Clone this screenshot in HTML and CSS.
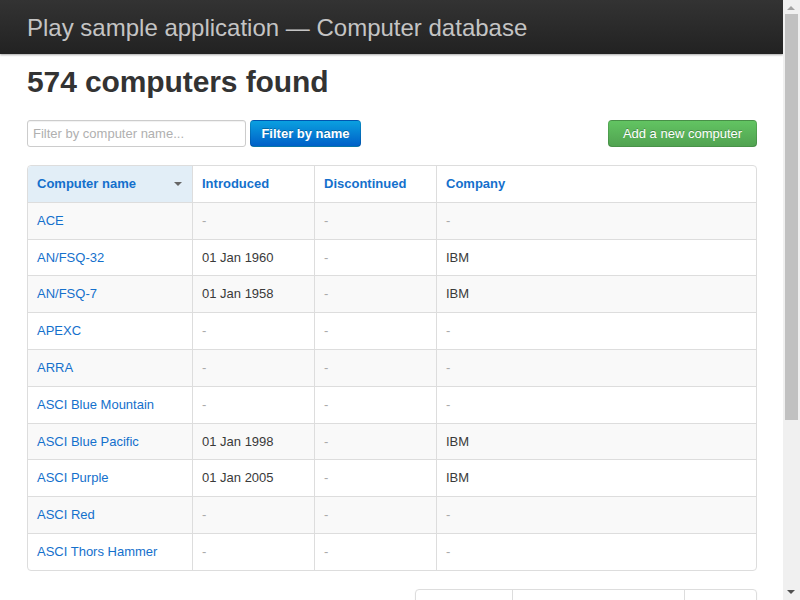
FILE: index.html
```html
<!DOCTYPE html>
<html>
<head>
<meta charset="utf-8">
<title>Computers database</title>
<link rel="stylesheet" href="styles.css">
</head>
<body>
<div class="page">
<header class="topbar">
  <a class="brand" href="#">Play sample application — Computer database</a>
</header>
<section class="main">
  <h1 class="title">574 computers found</h1>
  <div class="actions">
    <form class="filter">
      <input class="search" type="search" placeholder="Filter by computer name...">
      <button class="btn btn-primary" type="button">Filter by name</button>
    </form>
    <a class="btn btn-success" href="#">Add a new computer</a>
  </div>
  <table class="computers">
    <thead>
      <tr>
        <th class="c-name sorted"><a href="#">Computer name</a><span class="caret"></span></th>
        <th class="c-intro"><a href="#">Introduced</a></th>
        <th class="c-disc"><a href="#">Discontinued</a></th>
        <th class="c-comp"><a href="#">Company</a></th>
      </tr>
    </thead>
    <tbody>
      <tr><td><a href="#">ACE</a></td><td><em>-</em></td><td><em>-</em></td><td><em>-</em></td></tr>
      <tr><td><a href="#">AN/FSQ-32</a></td><td>01 Jan 1960</td><td><em>-</em></td><td>IBM</td></tr>
      <tr><td><a href="#">AN/FSQ-7</a></td><td>01 Jan 1958</td><td><em>-</em></td><td>IBM</td></tr>
      <tr><td><a href="#">APEXC</a></td><td><em>-</em></td><td><em>-</em></td><td><em>-</em></td></tr>
      <tr><td><a href="#">ARRA</a></td><td><em>-</em></td><td><em>-</em></td><td><em>-</em></td></tr>
      <tr><td><a href="#">ASCI Blue Mountain</a></td><td><em>-</em></td><td><em>-</em></td><td><em>-</em></td></tr>
      <tr><td><a href="#">ASCI Blue Pacific</a></td><td>01 Jan 1998</td><td><em>-</em></td><td>IBM</td></tr>
      <tr><td><a href="#">ASCI Purple</a></td><td>01 Jan 2005</td><td><em>-</em></td><td>IBM</td></tr>
      <tr><td><a href="#">ASCI Red</a></td><td><em>-</em></td><td><em>-</em></td><td><em>-</em></td></tr>
      <tr><td><a href="#">ASCI Thors Hammer</a></td><td><em>-</em></td><td><em>-</em></td><td><em>-</em></td></tr>
    </tbody>
  </table>
  <nav class="pagination">
    <ul>
      <li class="prev disabled"><a>&larr; Previous</a></li>
      <li class="current"><a>Displaying 1 to 10 of 574</a></li>
      <li class="next"><a href="#">Next &rarr;</a></li>
    </ul>
  </nav>
</section>
</div>
<div class="scrollbar" aria-hidden="true">
  <span class="sb-up"></span>
  <span class="sb-thumb"></span>
  <span class="sb-down"></span>
</div>
</body>
</html>
```

FILE: styles.css
```css
html, body {
  margin: 0;
  padding: 0;
}
body {
  font-family: "Liberation Sans", Arial, sans-serif;
  font-size: 13px;
  line-height: 18px;
  color: #3a3a3a;
  background: #fff;
}
a {
  color: #1470cc;
  text-decoration: none;
}
.page {
  width: 783px;
}
.topbar {
  height: 54px;
  background: linear-gradient(#333333, #222222);
  box-shadow: 0 1px 2px rgba(0,0,0,0.35);
  padding: 0 27px;
  display: flex;
  align-items: center;
}
.brand {
  color: #c4c4c4;
  font-size: 24px;
  line-height: 30px;
  margin-top: 1px;
}
.main {
  margin: 0 26px 0 27px;
}
.title {
  font-size: 30px;
  line-height: 36px;
  font-weight: bold;
  margin: 10px 0 20px;
  color: #333;
  letter-spacing: -0.1px;
}
.actions {
  display: flex;
  justify-content: space-between;
  align-items: center;
  margin-bottom: 18px;
}
.filter {
  display: flex;
  gap: 4px;
  margin: 0;
}
.search {
  box-sizing: border-box;
  width: 219px;
  height: 27px;
  border: 1px solid #ccc;
  border-radius: 3px;
  padding: 3px 5px;
  font-family: "Liberation Sans", Arial, sans-serif;
  font-size: 13px;
  color: #555;
  box-shadow: inset 0 1px 1px rgba(0,0,0,0.06);
  margin: 0;
}
.search::placeholder {
  color: #b0b0b0;
}
.btn {
  box-sizing: border-box;
  height: 27px;
  display: inline-flex;
  align-items: center;
  justify-content: center;
  border-radius: 4px;
  font-family: "Liberation Sans", Arial, sans-serif;
  font-size: 13px;
  color: #fff;
  text-shadow: 0 -1px 0 rgba(0,0,0,0.25);
  border: 1px solid rgba(0,0,0,0.12);
  border-bottom-color: rgba(0,0,0,0.25);
  margin: 0;
}
.btn-primary {
  width: 111px;
  font-weight: bold;
  background: linear-gradient(#0aa0e0, #0060c8);
}
.btn-success {
  width: 149px;
  background: linear-gradient(#62c462, #51a351);
}
.computers {
  width: 730px;
  border-collapse: separate;
  border-spacing: 0;
  border: 1px solid #ddd;
  border-radius: 4px;
  table-layout: fixed;
  margin-bottom: 18px;
}
.computers th, .computers td {
  text-align: left;
  padding: 8px 10px 8px 9px;
  line-height: 19.8px;
  border-left: 1px solid #ddd;
  border-top: 1px solid #ddd;
  vertical-align: middle;
}
.computers th {
  border-top: 0;
  font-weight: bold;
  position: relative;
  padding-top: 8px;
  padding-bottom: 8px;
}
.computers th a {
  color: #1470cc;
}
.computers th:first-child, .computers td:first-child {
  border-left: 0;
}
.c-name { width: 145px; }
.c-intro { width: 102px; }
.c-disc { width: 102px; }
.computers th.sorted {
  background: #e2eef7;
  border-top-left-radius: 4px;
}
.caret {
  position: absolute;
  right: 10px;
  top: 16px;
  width: 0;
  height: 0;
  border-left: 4px solid transparent;
  border-right: 4px solid transparent;
  border-top: 4px solid #666;
}
.computers tbody tr:nth-child(odd) td {
  background: #f9f9f9;
}
.computers tbody tr:last-child td:first-child {
  border-bottom-left-radius: 4px;
}
.computers tbody tr:last-child td:last-child {
  border-bottom-right-radius: 4px;
}
.computers em {
  font-style: normal;
  color: #aaa;
}
.pagination {
  display: flex;
  justify-content: flex-end;
  margin-bottom: 40px;
}
.pagination ul {
  display: flex;
  list-style: none;
  margin: 0;
  padding: 0;
  border: 1px solid #ddd;
  border-radius: 4px;
  box-shadow: 0 1px 2px rgba(0,0,0,0.05);
}
.pagination li {
  border-left: 1px solid #ddd;
}
.pagination li:first-child {
  border-left: 0;
}
.pagination li a {
  display: block;
  padding: 0 14px;
  line-height: 34px;
}
.pagination .prev a { width: 68px; color: #999; }
.pagination .current a { width: 143px; color: #999; }
.pagination .next a { width: 43px; }

/* imitation of the window's classic vertical scrollbar */
.scrollbar {
  position: fixed;
  top: 0;
  right: 0;
  width: 17px;
  height: 100vh;
  background: #f0f0f0;
}
.sb-up, .sb-down {
  position: absolute;
  left: 4px;
  width: 0;
  height: 0;
  border-left: 4px solid transparent;
  border-right: 4px solid transparent;
}
.sb-up {
  top: 6px;
  border-bottom: 4px solid #a3a3a3;
}
.sb-down {
  bottom: 6px;
  border-top: 4px solid #505050;
}
.sb-thumb {
  position: absolute;
  left: 2px;
  top: 14px;
  width: 13px;
  height: 406px;
  background: #c1c1c1;
}
```
